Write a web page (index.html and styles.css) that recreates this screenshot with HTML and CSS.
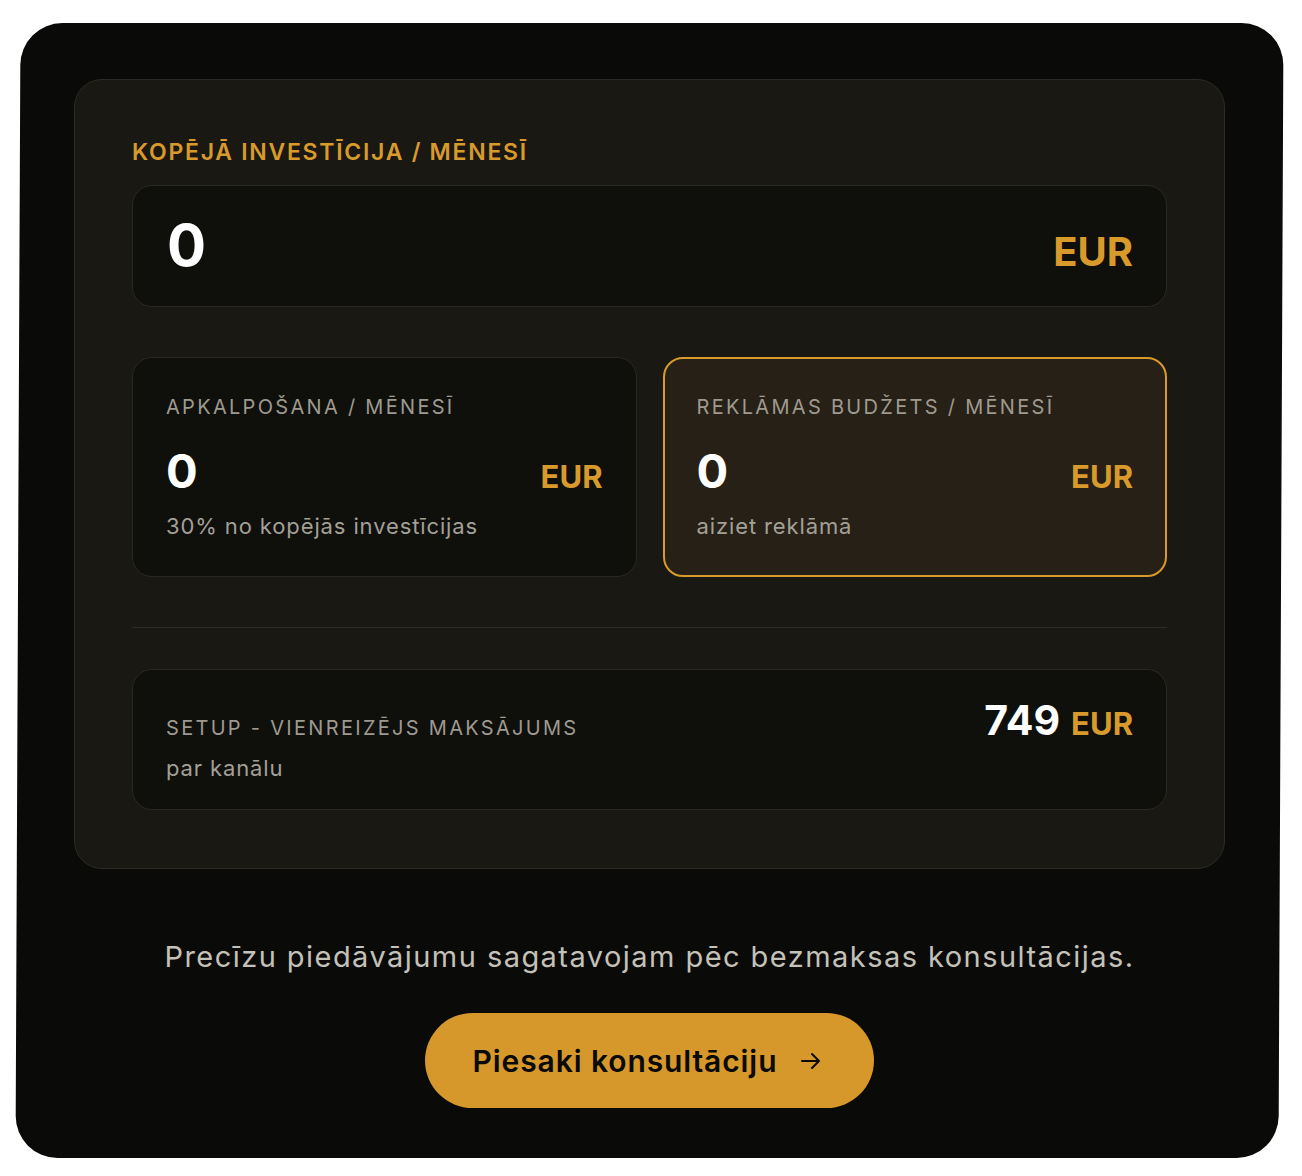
FILE: index.html
```html
<!DOCTYPE html>
<html lang="lv">
<head>
<meta charset="utf-8">
<title>Investīcija</title>
<link rel="stylesheet" href="styles.css">
</head>
<body>
<div class="shell">
  <section class="calc">
    <div class="total-label">KOPĒJĀ INVESTĪCIJA / MĒNESĪ</div>
    <div class="total-box">
      <span class="total-num">0</span>
      <span class="total-cur">EUR</span>
    </div>
    <div class="split">
      <div class="card">
        <div class="card-label">APKALPOŠANA / MĒNESĪ</div>
        <div class="card-row">
          <span class="card-num">0</span>
          <span class="card-cur">EUR</span>
        </div>
        <div class="card-sub">30% no kopējās investīcijas</div>
      </div>
      <div class="card card-accent">
        <div class="card-label">REKLĀMAS BUDŽETS / MĒNESĪ</div>
        <div class="card-row">
          <span class="card-num">0</span>
          <span class="card-cur">EUR</span>
        </div>
        <div class="card-sub">aiziet reklāmā</div>
      </div>
    </div>
    <div class="divider"></div>
    <div class="setup">
      <div class="setup-text">
        <div class="card-label">SETUP - VIENREIZĒJS MAKSĀJUMS</div>
        <div class="card-sub">par kanālu</div>
      </div>
      <div class="setup-price">
        <span class="setup-num">749</span>
        <span class="setup-cur">EUR</span>
      </div>
    </div>
  </section>
  <p class="note">Precīzu piedāvājumu sagatavojam pēc bezmaksas konsultācijas.</p>
  <a class="cta" href="#">
    <span>Piesaki konsultāciju</span>
    <svg class="cta-arrow" viewBox="0 0 24 24" width="24" height="24" aria-hidden="true">
      <path d="M3 12h17M13 5l7 7-7 7" fill="none" stroke="currentColor" stroke-width="2" stroke-linecap="round" stroke-linejoin="round"/>
    </svg>
  </a>
</div>
</body>
</html>
```

FILE: styles.css
```css
html, body {
  margin: 0;
  padding: 0;
  background: #ffffff;
}

body {
  font-family: Inter, "Noto Sans", "Liberation Sans", sans-serif;
  padding: 23px 0 19px 18px;
}

.shell {
  position: relative;
  isolation: isolate;
  width: 1263px;
  box-sizing: border-box;
  padding: 56px 56px 50px;
  display: flex;
  flex-direction: column;
  align-items: center;
}

.shell::before {
  content: "";
  position: absolute;
  inset: 0;
  background: #0a0a08;
  border-radius: 42px;
  transform: skewX(-0.25deg);
  z-index: -1;
}

.calc {
  align-self: stretch;
  background: #1a1813;
  border: 1px solid #2d2b25;
  border-radius: 28px;
  padding: 59px 57px 58px;
  display: flex;
  flex-direction: column;
}

.total-label {
  color: #d99a2c;
  font-size: 23px;
  font-weight: 600;
  letter-spacing: 0.075em;
  line-height: 1.2;
}

.total-box {
  margin-top: 18px;
  background: #0f0f0c;
  border: 1px solid #2a2823;
  border-radius: 20px;
  padding: 30px 33px 32px 34px;
  display: flex;
  justify-content: space-between;
  align-items: baseline;
}

.total-num {
  color: #ffffff;
  font-size: 58px;
  font-weight: 700;
  line-height: 1;
}

.total-cur {
  color: #d99a2c;
  font-size: 40px;
  font-weight: 700;
  line-height: 1;
}

.split {
  margin-top: 50px;
  display: grid;
  grid-template-columns: 1fr 1fr;
  gap: 26px;
}

.card {
  background: #0f0f0c;
  border: 1px solid #2a2823;
  border-radius: 20px;
  padding: 35px 33px 33px 33px;
}

.card-accent {
  background: #272016;
  border: 2px solid #d99a2c;
  padding: 34px 32px 32px 32px;
}

.card-label {
  color: #9e9a90;
  font-size: 20px;
  font-weight: 400;
  letter-spacing: 0.115em;
  line-height: 28px;
}

.card-row {
  margin-top: 26px;
  display: flex;
  justify-content: space-between;
  align-items: baseline;
}

.card-num {
  color: #ffffff;
  font-size: 47px;
  font-weight: 700;
  line-height: 1;
}

.card-cur {
  color: #d99a2c;
  font-size: 31px;
  font-weight: 700;
  line-height: 1;
}

.card-sub {
  margin-top: 16px;
  color: #a3a097;
  font-size: 22px;
  font-weight: 400;
  letter-spacing: 0.04em;
  line-height: 33px;
}

.divider {
  margin-top: 50px;
  height: 1px;
  background: #2e2c26;
}

.setup {
  margin-top: 41px;
  background: #0f0f0c;
  border: 1px solid #2a2823;
  border-radius: 20px;
  padding: 30px 33px 24px 33px;
  display: flex;
  justify-content: space-between;
  align-items: flex-start;
}

.setup-text {
  margin-top: 14px;
}

.setup-text .card-sub {
  margin-top: 10px;
}

.setup-price {
  display: flex;
  align-items: baseline;
  gap: 11px;
}

.setup-num {
  color: #ffffff;
  font-size: 41px;
  font-weight: 700;
  line-height: 1;
}

.setup-cur {
  color: #d99a2c;
  font-size: 31px;
  font-weight: 700;
  line-height: 1;
}

.note {
  margin: 68px 0 0;
  color: #c4c1b9;
  font-size: 29px;
  font-weight: 400;
  letter-spacing: 0.05em;
  line-height: 1.4;
  text-align: center;
}

.cta {
  margin-top: 36px;
  height: 95px;
  box-sizing: border-box;
  padding: 0 51px 0 48px;
  border-radius: 48px;
  background: #d6972b;
  color: #0a0a08;
  text-decoration: none;
  display: flex;
  align-items: center;
  gap: 22px;
  font-size: 30px;
  font-weight: 600;
  letter-spacing: 0.03em;
}

.cta-arrow {
  display: block;
  width: 24px;
  height: 24px;
}
```
